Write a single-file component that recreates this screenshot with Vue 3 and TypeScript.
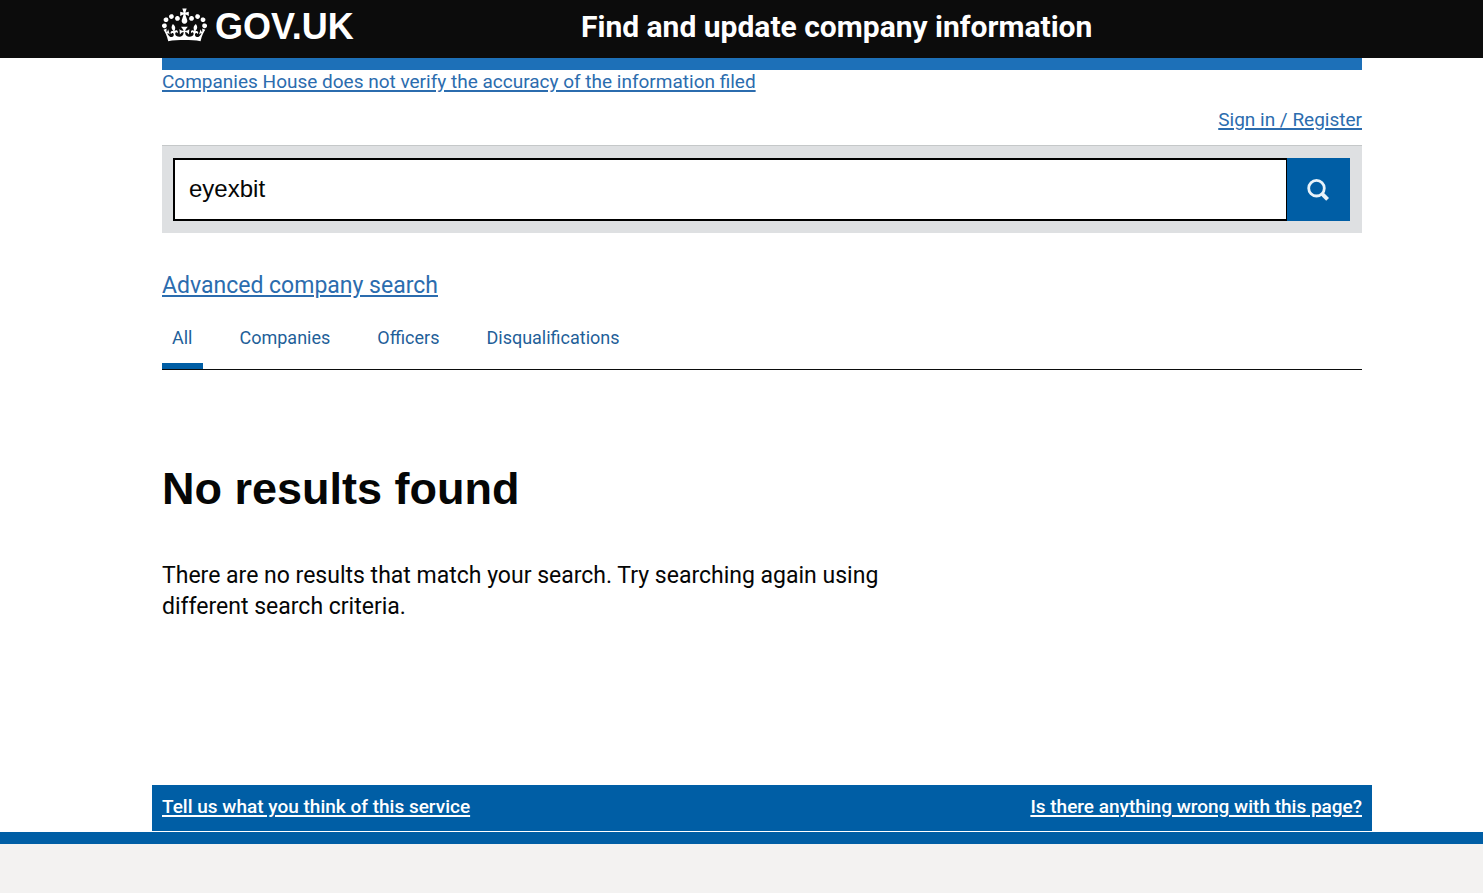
<script setup lang="ts">
import { ref } from 'vue'

const query = ref('eyexbit')
const activeTab = ref('All')
const tabs: string[] = ['All', 'Companies', 'Officers', 'Disqualifications']
</script>

<template>
  <div class="page">
    <header class="header">
      <a class="logo" href="#" aria-label="GOV.UK">
        <svg class="crown" viewBox="0 0 132 97" aria-hidden="true">
          <path fill="currentColor" fill-rule="evenodd" d="M25 30.2c3.5 1.5 7.7-.2 9.1-3.7 1.5-3.6-.2-7.8-3.9-9.2-3.6-1.4-7.6.3-9.1 3.9-1.4 3.5.3 7.5 3.9 9zM9 39.5c3.6 1.5 7.8-.2 9.2-3.7 1.5-3.6-.2-7.8-3.9-9.1-3.6-1.5-7.6.2-9.1 3.8-1.4 3.5.3 7.5 3.8 9zM4.4 57.2c3.5 1.5 7.7-.2 9.1-3.8 1.5-3.6-.2-7.7-3.9-9.1-3.5-1.5-7.6.3-9.1 3.8-1.4 3.5.3 7.6 3.9 9.1zm38.3-21.4c3.5 1.5 7.7-.2 9.1-3.8 1.5-3.6-.2-7.7-3.9-9.1-3.6-1.5-7.6.3-9.1 3.8-1.3 3.6.4 7.7 3.9 9.1zm64.4-5.6c-3.6 1.5-7.8-.2-9.1-3.7-1.5-3.6.2-7.8 3.8-9.2 3.6-1.4 7.7.3 9.2 3.9 1.3 3.5-.4 7.5-3.9 9zm15.9 9.3c-3.6 1.5-7.7-.2-9.1-3.7-1.5-3.6.2-7.8 3.7-9.1 3.6-1.5 7.7.2 9.2 3.8 1.5 3.5-.3 7.5-3.8 9zm4.7 17.7c-3.6 1.5-7.8-.2-9.2-3.8-1.5-3.6.2-7.7 3.9-9.1 3.6-1.5 7.7.3 9.2 3.8 1.3 3.5-.4 7.6-3.9 9.1zM89.3 35.8c-3.6 1.5-7.8-.2-9.2-3.8-1.4-3.6.2-7.7 3.9-9.1 3.6-1.5 7.7.3 9.2 3.8 1.4 3.6-.3 7.7-3.9 9.1zM69.7 17.7l8.9 4.7V9.3l-8.9 2.8c-.2-.3-.5-.6-.9-.9L72.4 0H59.6l3.5 11.2c-.3.3-.6.5-.9.9l-8.8-2.8v13.1l8.8-4.7c.3.3.6.7.9.9l-5 15.4v.1c-.2.8-.4 1.6-.4 2.4 0 4.1 3.1 7.5 7 8.1h.2c.3 0 .7.1 1 .1.4 0 .7 0 1-.1h.2c4-.6 7.1-4.1 7.1-8.1 0-.8-.1-1.7-.4-2.4V34l-5.1-15.4c.4-.2.7-.6 1-.9zM66 92.8c16.9 0 32.8 1.1 47.1 3.2 4-16.9 8.9-26.7 14-33.5l-9.6-3.4c1 4.9 1.1 7.2 0 10.2-1.5-1.4-3-4.3-4.2-8.7L108.6 76c2.8-2 5-3.2 7.5-3.3-4.4 9.4-10 11.9-13.6 11.2-4.3-.8-6.3-4.6-5.6-7.9 1-4.7 5.7-5.9 8-.5 4.3-8.7-3-11.4-7.6-8.8 7.1-7.2 7.9-13.5 2.1-21.1-8 6.1-8.1 12.3-4.5 20.8-4.7-5.4-12.1-2.5-9.5 6.2 3.4-5.2 7.9-2 7.2 3.1-.6 4.3-6.4 7.8-13.5 7.2-10.3-.9-10.9-8-11.2-13.8 2.5-.5 7.1 1.8 11 7.3L80.2 60c-4.1 4.4-8 5.3-12.3 5.4 1.4-4.4 8-11.6 8-11.6H55.5s6.4 7.2 7.9 11.6c-4.2-.1-8-1-12.3-5.4l1.4 16.4c3.9-5.5 8.5-7.7 10.9-7.3-.3 5.8-.9 12.8-11.1 13.8-7.2.6-12.9-2.9-13.5-7.2-.7-5 3.8-8.3 7.1-3.1 2.7-8.7-4.6-11.6-9.4-6.2 3.7-8.5 3.6-14.7-4.6-20.8-5.8 7.6-5 13.9 2.2 21.1-4.7-2.6-11.9.1-7.7 8.8 2.3-5.5 7.1-4.2 8.1.5.7 3.3-1.3 7.1-5.7 7.9-3.5.7-9-1.8-13.5-11.2 2.5.1 4.7 1.3 7.5 3.3l-4.7-15.4c-1.2 4.4-2.7 7.2-4.3 8.7-1.1-3-.9-5.3 0-10.2l-9.5 3.4c5 6.9 9.9 16.7 14 33.5 14.8-2.1 30.8-3.2 47.7-3.2z" />
        </svg>
        <span class="logotype">GOV.UK</span>
      </a>
      <a class="service" href="#">Find and update company information</a>
    </header>

    <main class="main">
      <div class="bar"></div>
      <a class="link notice" href="#">Companies House does not verify the accuracy of the information filed</a>
      <nav class="account" aria-label="Account">
        <a class="link" href="#">Sign in / Register</a>
      </nav>

      <form class="search" role="search" @submit.prevent>
        <input v-model="query" class="field" type="text" aria-label="Search companies and officers" />
        <button class="go" type="submit" aria-label="Search">
          <svg class="glass" viewBox="0 0 24 24" aria-hidden="true">
            <circle cx="9.5" cy="10.2" r="7.8" fill="none" stroke="currentColor" stroke-width="2.8" />
            <path d="M14.9 15.6L20.6 21.3" fill="none" stroke="currentColor" stroke-width="4" />
          </svg>
        </button>
      </form>

      <a class="link advanced" href="#">Advanced company search</a>

      <nav class="tabs" aria-label="Result type">
        <a
          v-for="tab in tabs"
          :key="tab"
          class="tab"
          :class="{ active: tab === activeTab }"
          href="#"
          @click.prevent="activeTab = tab"
        >{{ tab }}</a>
      </nav>

      <h1 class="title">No results found</h1>
      <p class="text">There are no results that match your search. Try searching again using different search criteria.</p>
    </main>

    <aside class="feedback">
      <a href="#">Tell us what you think of this service</a>
      <a href="#">Is there anything wrong with this page?</a>
    </aside>
    <footer class="footer"></footer>
  </div>
</template>

<style>
body {
  margin: 0;
  background: #fff;
}
</style>

<style scoped>
.page {
  display: flex;
  flex-direction: column;
  min-height: 100vh;
  color: #050606;
  font-family: Roboto, "Noto Sans", sans-serif;
  font-size: 19px;
  line-height: 24px;
}
.header {
  display: grid;
  grid-template-columns: 419px 1fr;
  align-items: center;
  box-sizing: border-box;
  height: 58px;
  padding: 0 121px 4px 162px;
  background: #0c0c0c;
}
.logo {
  display: flex;
  align-items: center;
  gap: 8px;
  color: #fff;
  text-decoration: none;
}
.crown {
  width: 45px;
  height: 34px;
  margin-bottom: 4px;
}
.logotype {
  font-family: "Liberation Sans", Arial, sans-serif;
  font-size: 36px;
  font-weight: 700;
  line-height: 44px;
}
.service {
  color: #fff;
  font-size: 30px;
  font-weight: 700;
  line-height: 40px;
  text-decoration: none;
  white-space: nowrap;
}
.main {
  display: flex;
  flex: 1;
  flex-direction: column;
  align-items: stretch;
  padding: 0 121px 0 162px;
}
.bar {
  height: 12px;
  background: #1d70b8;
}
.link {
  color: #2b6cae;
  text-decoration: underline;
  text-decoration-thickness: 2px;
  text-underline-offset: 2px;
}
.notice {
  align-self: flex-start;
}
.account {
  display: flex;
  justify-content: flex-end;
  margin: 14px 0 13px;
}
.search {
  display: flex;
  box-sizing: border-box;
  height: 88px;
  padding: 12px 12px 12px 11px;
  border-top: 1px solid #c5c8c9;
  background: #dee0e2;
}
.field {
  flex: 1;
  min-width: 0;
  box-sizing: border-box;
  padding: 0 14px 2px;
  border: 2px solid #000;
  border-right-width: 1px;
  border-radius: 0;
  background: #fff;
  color: #050606;
  font-family: "Liberation Sans", Arial, sans-serif;
  font-size: 24px;
}
.go {
  display: grid;
  place-items: center;
  width: 63px;
  padding: 0;
  border: 0;
  background: #005ea5;
  color: #e8f3fa;
}
.glass {
  width: 24px;
  height: 24px;
}
.advanced {
  align-self: flex-start;
  margin-top: 37px;
  font-size: 23px;
  line-height: 32px;
}
.tabs {
  display: flex;
  gap: 27px;
  margin-top: 18px;
  border-bottom: 1px solid #0b0c0c;
}
.tab {
  padding: 6px 10px 13px;
  border-bottom: 6px solid transparent;
  color: #1f5f99;
  font-size: 18px;
  text-decoration: none;
}
.tab.active {
  border-bottom-color: #005ea5;
}
.title {
  margin: 94px 0 0;
  font-family: "Liberation Sans", Arial, sans-serif;
  font-size: 45px;
  font-weight: 700;
  line-height: 50px;
}
.text {
  max-width: 740px;
  margin: 46px 0 0;
  font-size: 23px;
  line-height: 31px;
}
.feedback {
  display: flex;
  justify-content: space-between;
  margin: 0 111px 1px 152px;
  padding: 10px 10px 12px;
  background: #005ea5;
}
.feedback a {
  color: #fff;
  font-weight: 500;
  text-decoration-thickness: 2px;
  text-underline-offset: 2px;
}
.footer {
  box-sizing: border-box;
  height: 61px;
  border-top: 12px solid #005ea5;
  background: #f3f2f1;
}
</style>
